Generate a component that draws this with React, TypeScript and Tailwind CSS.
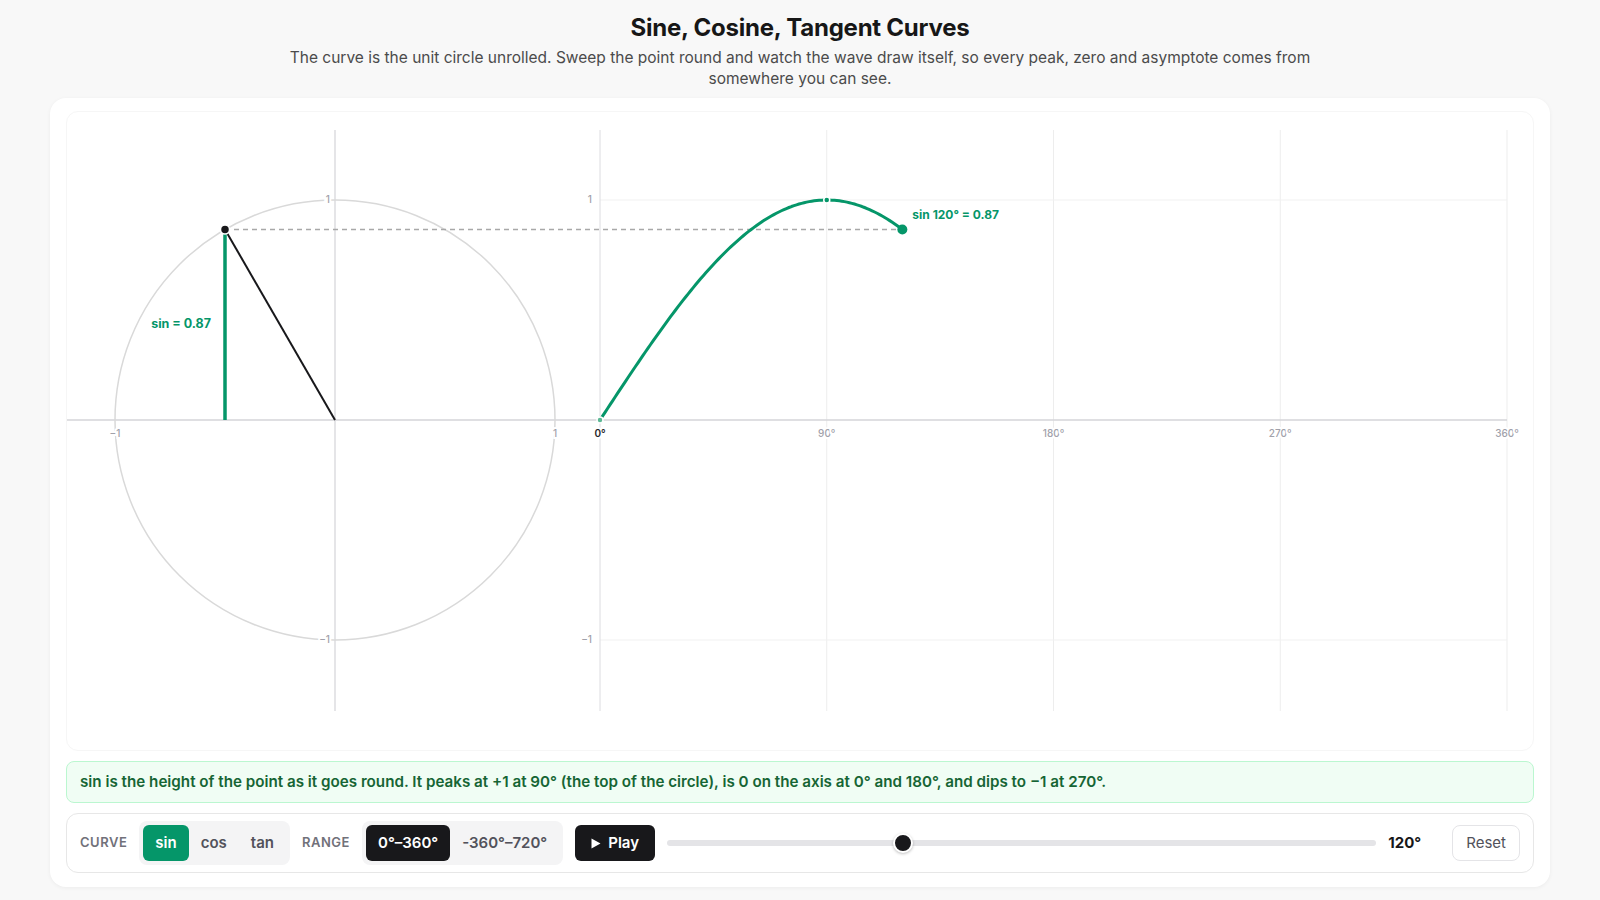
import { useState } from 'react';

type Curve = 'sin' | 'cos' | 'tan';

// drawing area of the inner panel
const W = 1468;
const H = 638;
const CX = 268;
const CY = 308;
const R = 220;
const GX0 = 533;
const GX1 = 1440;

const GREEN = '#059669';

const fns: Record<Curve, (r: number) => number> = {
  sin: Math.sin,
  cos: Math.cos,
  tan: Math.tan,
};

const notes: Record<Curve, string> = {
  sin: 'sin is the height of the point as it goes round. It peaks at +1 at 90° (the top of the circle), is 0 on the axis at 0° and 180°, and dips to −1 at 270°.',
  cos: 'cos is the sideways reach of the point. It starts at +1 at 0°, crosses 0 at 90° and 270°, and bottoms out at −1 at 180°.',
  tan: 'tan is sin divided by cos. Wherever cos is 0 (90° and 270°) it blows up, so the curve has an asymptote there.',
};

function Segmented<T extends string>({
  options,
  value,
  onChange,
  active,
}: {
  options: { id: T; label: string }[];
  value: T;
  onChange: (v: T) => void;
  active: string;
}) {
  return (
    <div className="flex items-center rounded-lg bg-[#f4f4f5] p-1">
      {options.map((o) => (
        <button
          key={o.id}
          onClick={() => onChange(o.id)}
          className={
            o.id === value
              ? `h-9 rounded-md px-3 text-[15px] font-semibold text-white ${active}`
              : 'h-9 rounded-md px-3 text-[15px] font-semibold text-[#52525b]'
          }
        >
          {o.label}
        </button>
      ))}
    </div>
  );
}

export default function App() {
  const [curve, setCurve] = useState<Curve>('sin');
  const [range, setRange] = useState<'base' | 'wide'>('base');
  const [angle, setAngle] = useState(120);

  const f = fns[curve];
  const rad = (angle * Math.PI) / 180;
  const px = CX + R * Math.cos(rad);
  const py = CY - R * Math.sin(rad);
  const val = f(rad);

  const gx = (d: number) => GX0 + (d * (GX1 - GX0)) / 360;
  const gy = (v: number) => CY - R * Math.max(-2.5, Math.min(2.5, v));

  let path = '';
  for (let d = 0; d <= angle; d += 1) {
    const v = f((d * Math.PI) / 180);
    path += `${d === 0 ? 'M' : 'L'}${gx(d).toFixed(2)},${gy(v).toFixed(2)} `;
  }

  const endX = gx(angle);
  const endY = gy(val);
  const keys = [0, 90, 180, 270, 360].filter((d) => d <= angle);

  return (
    <div className="min-h-screen bg-[#f8f8f8] font-['Inter','Noto_Sans',sans-serif] text-[#171717]">
      <div className="flex flex-col items-center px-[50px] pt-3 pb-3">
        <h1 className="text-[24px] font-bold leading-8 tracking-[-0.01em]">Sine, Cosine, Tangent Curves</h1>
        <p className="mt-[3px] max-w-[1060px] text-center text-[15.5px] leading-[21px] text-[#4b4b4b]">
          The curve is the unit circle unrolled. Sweep the point round and watch the wave draw itself, so every peak,
          zero and asymptote comes from somewhere you can see.
        </p>

        <div className="mt-[9px] flex w-full flex-col gap-[10px] rounded-2xl bg-white px-4 pt-[13px] pb-[14px] shadow-[0_1px_4px_rgba(0,0,0,0.05)]">
          <div className="rounded-xl border border-[#f6f6f6]">
            <svg width={W} height={H} viewBox={`0 0 ${W} ${H}`} className="block">
              {/* graph grid */}
              {[90, 180, 270, 360].map((d) => (
                <line key={d} x1={gx(d)} y1={18} x2={gx(d)} y2={599} stroke="#ededed" strokeWidth={1} />
              ))}
              <line x1={GX0} y1={88} x2={GX1} y2={88} stroke="#f1f1f1" strokeWidth={1} />
              <line x1={GX0} y1={528} x2={GX1} y2={528} stroke="#f1f1f1" strokeWidth={1} />
              <line x1={GX0} y1={18} x2={GX0} y2={599} stroke="#dcdce0" strokeWidth={1} />

              {/* circle axes */}
              <line x1={CX} y1={18} x2={CX} y2={599} stroke="#d4d4d8" strokeWidth={1.2} />
              <line x1={0} y1={CY} x2={GX1} y2={CY} stroke="#d4d4d8" strokeWidth={1.5} />
              <circle cx={CX} cy={CY} r={R} fill="none" stroke="#d9d9d9" strokeWidth={1.5} />

              {/* axis labels */}
              <g fontSize={10} fontWeight={500} fill="#a1a1aa" stroke="#ffffff" strokeWidth={4} paintOrder="stroke">
                <text x={CX - 5} y={88} textAnchor="end" dominantBaseline="middle">1</text>
                <text x={CX - 5} y={528} textAnchor="end" dominantBaseline="middle">−1</text>
                <text x={CX - R} y={322} textAnchor="middle" dominantBaseline="middle">−1</text>
                <text x={CX + R} y={322} textAnchor="middle" dominantBaseline="middle">1</text>
                <text x={GX0 - 8} y={88} textAnchor="end" dominantBaseline="middle">1</text>
                <text x={GX0 - 8} y={528} textAnchor="end" dominantBaseline="middle">−1</text>
                {[90, 180, 270, 360].map((d) => (
                  <text key={d} x={gx(d)} y={322} textAnchor="middle" dominantBaseline="middle">
                    {d}°
                  </text>
                ))}
                <text x={GX0} y={322} textAnchor="middle" dominantBaseline="middle" fill="#27272a" fontWeight={600}>
                  0°
                </text>
              </g>

              {/* projection */}
              <line x1={px} y1={py} x2={endX} y2={py} stroke="#a8a8a8" strokeWidth={1.5} strokeDasharray="5 4" />
              {curve === 'sin' && (
                <line x1={px} y1={py} x2={px} y2={CY} stroke={GREEN} strokeWidth={3.5} />
              )}
              {curve === 'cos' && (
                <line x1={CX} y1={CY} x2={px} y2={CY} stroke={GREEN} strokeWidth={3.5} />
              )}
              <line x1={CX} y1={CY} x2={px} y2={py} stroke="#18181b" strokeWidth={2} />
              <circle cx={px} cy={py} r={4.5} fill="#18181b" stroke="#ffffff" strokeWidth={1.5} />
              <text
                x={curve === 'sin' ? px - 14 : (CX + px) / 2}
                y={curve === 'sin' ? (py + CY) / 2 : CY - 12}
                textAnchor={curve === 'sin' ? 'end' : 'middle'}
                dominantBaseline="middle"
                fontSize={12.5}
                fontWeight={700}
                fill={GREEN}
              >
                {curve} = {val.toFixed(2)}
              </text>

              {/* wave */}
              <path d={path} fill="none" stroke={GREEN} strokeWidth={3} strokeLinecap="round" strokeLinejoin="round" />
              {keys.map((d) => (
                <circle
                  key={d}
                  cx={gx(d)}
                  cy={gy(f((d * Math.PI) / 180))}
                  r={3}
                  fill={d === 0 ? '#5cb894' : GREEN}
                  stroke="#ffffff"
                  strokeWidth={1.5}
                />
              ))}
              <circle cx={endX} cy={endY} r={5} fill={GREEN} />
              <text x={endX + 10} y={endY - 14} dominantBaseline="middle" fontSize={12} fontWeight={700} fill={GREEN}>
                {curve} {angle}° = {val.toFixed(2)}
              </text>
            </svg>
          </div>

          <div className="flex h-[42px] items-center rounded-lg border border-[#bbf7d0] bg-[#f0fdf4] px-[13px] text-[15.2px] font-semibold text-[#166534]">
            {notes[curve]}
          </div>

          <div className="flex h-[60px] items-center gap-3 rounded-xl border border-[#e7e7e7] px-[13px]">
            <span className="text-[13px] font-semibold tracking-[0.04em] text-[#71717a]">CURVE</span>
            <Segmented
              options={[
                { id: 'sin', label: 'sin' },
                { id: 'cos', label: 'cos' },
                { id: 'tan', label: 'tan' },
              ]}
              value={curve}
              onChange={setCurve}
              active="bg-[#059669]"
            />
            <span className="text-[13px] font-semibold tracking-[0.04em] text-[#71717a]">RANGE</span>
            <Segmented
              options={[
                { id: 'base', label: '0°–360°' },
                { id: 'wide', label: '-360°–720°' },
              ]}
              value={range}
              onChange={setRange}
              active="bg-[#18181b]"
            />
            <button className="flex h-9 items-center gap-[7px] rounded-md bg-[#18181b] px-4 text-[15px] font-semibold text-white">
              <svg width="10" height="11" viewBox="0 0 10 11">
                <path d="M0.5 0.5 L9.5 5.5 L0.5 10.5 Z" fill="#ffffff" />
              </svg>
              Play
            </button>
            <div className="relative h-[6px] flex-1 rounded-full bg-[#e4e4e7]">
              <div
                className="absolute top-1/2 h-5 w-5 -translate-x-1/2 -translate-y-1/2 rounded-full border-2 border-white bg-[#18181b] shadow-[0_1px_3px_rgba(0,0,0,0.25)]"
                style={{ left: `${(angle / 360) * 100}%` }}
              />
              <input
                type="range"
                min={0}
                max={360}
                value={angle}
                onChange={(e) => setAngle(Number(e.target.value))}
                className="absolute inset-x-0 top-1/2 h-5 -translate-y-1/2 cursor-pointer opacity-0"
              />
            </div>
            <span className="w-[52px] text-[15px] font-bold">{angle}°</span>
            <button
              onClick={() => setAngle(0)}
              className="h-9 rounded-lg border border-[#e4e4e7] bg-white px-[13px] text-[15px] text-[#52525b]"
            >
              Reset
            </button>
          </div>
        </div>
      </div>
    </div>
  );
}
